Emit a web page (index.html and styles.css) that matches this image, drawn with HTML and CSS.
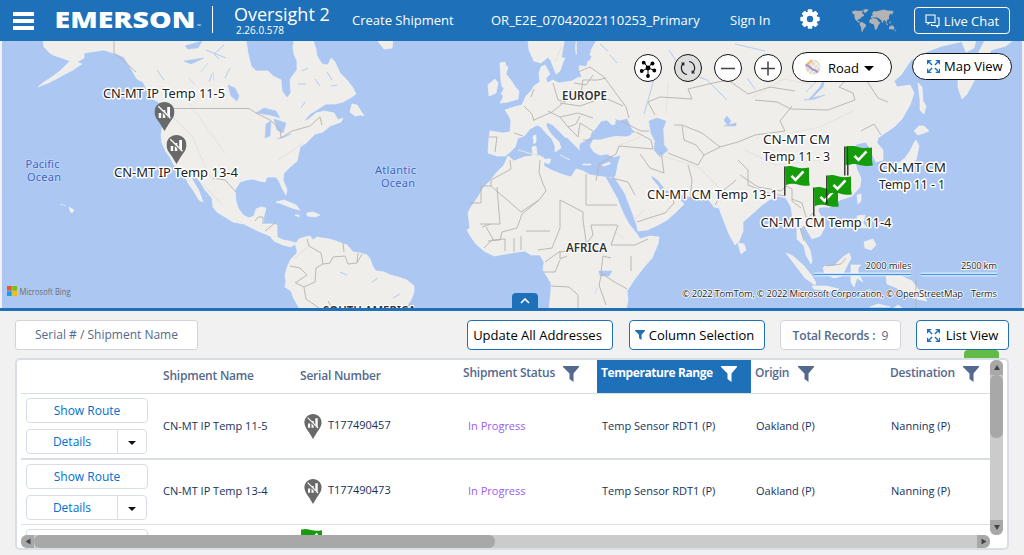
FILE: index.html
```
<!DOCTYPE html>
<html lang="en">
<head>
<meta charset="utf-8">
<title>Oversight 2</title>
<link rel="stylesheet" href="styles.css">
</head>
<body>
<svg class="defs" width="0" height="0">
  <defs>
    <symbol id="pin" viewBox="0 0 20 29"><path d="M10 0C4.400 0 0 4.300 0 10c0 4.500 3 8 5.500 11.500L10 29l4.500-7.500C17 18 20 14.500 20 10 20 4.300 15.600 0 10 0z" fill="#696969"/><path d="M4.200 11h2.500v5H4.200zM8.300 8h2.500v8H8.300zM12.700 5h2.800v11h-2.800z" fill="#fff"/><path d="M3.500 4.800l12 12" stroke="#696969" stroke-width="2.200"/><path d="M3.800 4.300l12.200 12" stroke="#fff" stroke-width="1.300"/></symbol>
    <symbol id="flag" viewBox="0 0 26 30"><path d="M.8.500v29" stroke="#222" stroke-width="1.300"/><path d="M1 .8c4-1.500 8-.5 12 .8 4 .9 8 .6 12-.2v12.500l.8 5.500c-4 .8-7 .3-11-.7-4-1.200-8-1.300-13.300.6z" fill="#159c0b"/><path d="M7.500 9.800l4 4 8-8.500" fill="none" stroke="#fff" stroke-width="2.600"/></symbol>
    <symbol id="funnel" viewBox="0 0 16 16"><path d="M0 0h16v1L10.500 7.500V16l-4-3V7.500L0 1z" fill="currentColor"/></symbol>
    <symbol id="expand" viewBox="0 0 12 12"><path d="M.5 4V.5H4M8 .5h3.500V4M11.500 8v3.500H8M4 11.500H.5V8M1 1l3.700 3.700M11 1L7.300 4.700M11 11L7.300 7.300M1 11l3.700-3.700" fill="none" stroke="#1e70b8" stroke-width="1.300"/></symbol>
  </defs>
</svg>

<header class="topbar">
  <div class="burger"><i></i><i></i><i></i></div>
  <svg class="brand" width="150" height="30" viewBox="0 -3 150 30"><text x="-.5" y="19.500" textLength="141" lengthAdjust="spacingAndGlyphs" class="brand-name">EMERSON</text><text x="142" y="19.500" class="brand-tm">™</text></svg>
  <div class="rule"></div>
  <div class="product"><span class="product-name">Oversight 2</span><span class="version">2.26.0.578</span></div>
  <nav class="nav">
    <a class="nav-create">Create Shipment</a>
    <a class="nav-org">OR_E2E_07042022110253_Primary</a>
    <a class="nav-sign">Sign In</a>
  </nav>
  <svg class="gear" width="20" height="20" viewBox="-10 -10 20 20"><g fill="#fff"><circle r="7.600"/><g id="t"><rect x="-2.300" y="-9.700" width="4.600" height="19.400" rx="1"/><rect x="-9.700" y="-2.300" width="19.400" height="4.600" rx="1"/></g><use href="#t" transform="rotate(45)"/></g><circle r="3.200" fill="#1e70b8"/></svg>
  <svg class="world" width="46" height="24" viewBox="0 0 46 24"><path fill="#b3b3b3" d="M1 2.500L4 1.500 8 2 11 1.500 12 3 10.500 4 12.500 5 13 7 10.500 8 9 10 7 10.500 6.500 12 8 12 9 13.500 7.500 13.500 4.500 11 3.500 8 3.500 5.500 1.500 4.500zM12 .8L16 0 17.500 1 15 3.500 13.500 4zM9 13.500L11 13 15 15.500 14.500 18 12.500 20 11.500 23 10.500 22.500 10 18 8.500 15.500zM21 4.500L23 2 25 2.500 29 1.500 33 .5 36 1.500 41 1.800 43 3 41.500 4 41 6 39.500 4.500 38 7 38 10 36 11 36 14 34.500 12 33 11 31.500 14 30 11 28 9.500 26 8.500 22.500 8.500 20 9 20 7 22 6.500zM19 10.500L22 9 26 10 28 13 29.500 13 27 17 26 20 24 21 23 15.500 20 14.500 18 13zM38 18L40 16.500 42 16.500 43.500 19 42.500 21 40 20 38 20.500zM34.500 13.500L37 15.500 37 16.500 35 15zM38.500 12.500h1v2h-1zM44.500 20.500L45.500 21 43.500 23z"/></svg>
  <button class="chat"><svg width="15" height="14" viewBox="0 0 15 14"><path d="M1 1h9v7.500H4.500L3 10V8.500H1zM12 4h2v7.500h-1.500V13L11 11.500H6.500V10" fill="none" stroke="#fff" stroke-width="1.100"/></svg>Live Chat</button>
</header>

<main>
<section class="map">
  <svg class="world-map" width="1020" height="267" viewBox="2 41 1020 267">
    <rect x="2" y="41" width="1020" height="267" fill="#acc7f2"/>
    <g class="land">
      <path d="M43 40L44 47 50 53 53 55 59 57 65 59 70 61 64 67 60 71 52 77 44 82 38 87 48 83 58 78 65 74 73 70 77 67 82 64 77 62 84 58 84 53 97 51 104 50 110 52 117 54 124 57 127 62 133 72 137 79 143 82 147 90 150 95 155 100 160 103 162 108 163 123 161 135 162 143 166 152 170 157 174 165 180 168 185 176 188 183 193 190 199 200 203 202 199 191 195 184 190 176 189 173 197 178 201 183 205 190 212 198 213 207 217 212 225 217 233 222 244 224 250 227 258 231 263 233 270 236 274 241 283 245 291 247 295 244 297 250 297 253 291 259 288 265 285 275 286 281 285 287 291 291 294 299 297 304 300 310 404 310 411 300 414 292 414 286 407 280 398 277 390 275 384 272 376 271 373 267 370 259 367 255 360 253 353 252 347 245 341 243 336 241 329 239 322 238 317 237 313 240 310 236 305 237 299 239 296 243 289 241 283 240 277 237 277 231 277 225 272 224 263 224 264 216 266 208 261 207 256 209 254 216 249 218 243 215 238 208 236 201 235 190 240 182 246 180 253 179 259 181 265 182 267 177 276 177 279 181 282 188 286 195 287 190 283 180 284 173 290 167 297 161 299 152 300 147 306 143 312 137 315 134 323 132 330 126 341 122 343 118 338 120 334 113 324 111 316 113 309 119 303 122 310 114 318 109 326 104 335 104 343 102 350 98 356 94 353 88 347 80 340 73 335 62 331 58 328 65 322 64 317 56 316 49 313 40H294L293 48 294 54 297 61 297 70 293 75 290 80 291 93 287 98 282 91 281 80 273 76 268 71 256 71 251 66 248 53 246 40z"/>
      <path d="M352 104l5 1 7 11-3-1-6 1-5-4zM377 40h16l-1 8-8 1zM276 202l8-2 12 5 4 5-8-2-10-4zM307 213l6-1 7 3-5 2-8-1zM295 215l4 0v2zM60 204l6 2M69 207l5 3-2 3-2-2z"/>
      <path d="M500 63l5-1 1 4 2 1-2 7 4 5 6 9 3 3-1 8-10 3-8 1 3-5 0-3-2-1 3-5-2-3-1-5zM488 85l7-6 3 4-2 10-7 3zM540 160l7-1 4 0-2 5zM532 147l4-1 1 8-4 2zM533 136l3-1 0 7-2 2zM583 164l8 0v1h-8zM602 165l8-3 0 2-6 2z"/>
      <path d="M528 40L529 50 534 61 541 63 548 57 551 61 556 74 560 71 563 62 566 56 565 40zM575 40L576 54 584 56 586 53 592 56 590 61 580 61 579 70 582 77 577 78 572 81 559 83 553 80 547 83 546 78 550 74 545 65 541 67 539 73 540 82 534 86 531 91 526 96 522 105 514 107 505 110 509 116 511 121 510 132 503 133 490 131 489 138 488 153 497 156 505 156 509 153 515 147 518 138 524 136 530 129 537 125 541 127 546 133 552 139 555 146 555 152 561 148 559 142 551 134 546 126 547 122 553 125 560 132 568 140 573 147 575 154 580 154 579 147 580 143 585 141 590 137 591 133 596 128 601 121 607 120 612 125 617 123 614 118 621 121 627 126 632 135 626 137 617 136 608 138 601 140 593 140 590 146 594 152 600 155 607 154 614 157 621 155 618 164 616 175 613 180 616 184 622 194 628 205 634 218 638 231 647 230 658 225 667 220 676 212 684 204 677 197 672 190 668 194 661 193 658 186 652 179 651 175 658 180 666 190 677 193 690 197 703 197 709 200 714 207 719 208 722 216 729 234 735 245 739 241 743 231 743 222 751 215 762 205 769 200 778 196 786 198 791 207 793 220 797 230 797 239 804 246 806 255 811 264 812 260 810 250 803 238 800 229 804 225 812 239 820 236 824 229 824 221 818 211 819 207 830 207 840 200 852 196 860 187 861 178 857 170 855 162 860 157 864 153 858 151 852 150 857 144 866 142 869 147 872 154 876 162 883 160 883 150 877 143 878 138 885 133 894 127 902 119 910 105 914 93 910 85 897 87 894 81 901 75 911 60 926 52 942 46 960 42 963 40z"/>
      <path d="M508 156L504 165 497 172 490 181 484 187 478 197 471 207 468 213 470 228 467 230 471 237 476 244 484 251 494 256 506 254 517 252 525 251 531 255 540 255 544 262 543 270 551 283 551 290 549 310H626L628 300 627 291 634 280 644 267 652 258 658 244 659 237 650 236 640 239 637 234 629 224 624 215 619 203 615 191 611 181 613 178 604 177 590 175 583 171 576 169 571 177 561 174 551 170 544 166 544 158 538 155 524 157 514 161z"/>
      <path d="M918 83l4 4 1 14 3 5-2 8-4-4 0-10zM919 126l5 0 5 5-5 2-6 2-4-4zM916 140l3 6-3 14-9 5-8 3-3-3 9-7 5-7 4-8zM896 166l4-1-1 4-3 1zM857 195l4-1 0 7-3 3zM738 243l6 1 2 6-5 4zM819 205l4-1v3h-4zM857 216l8-1-2 8 4 5-5 0-4-6zM864 242l9-3 3 6-5 5-6-2zM786 253l7 3 11 10 8 10 4 7-1 2-10-7-9-12zM812 286l14 0 13 3-7 2-18-2zM825 266l9 0 9-9 6-4 2 5-4 8-5 10-8 2-9-4-2-6zM851 265l10 0-3 3 0 5 5 9-6-4-3 9-3-5zM886 275l15 1 11 5 6 8 9 12-10-2-12-3-8-8-10-4z"/>
      <path d="M958 74l18 0-1 5-8 15-5 5-4-12zM961 40l15 0-2 8-8 4zM985 40h28l-7 6-15 4-7 18-6 2-4-8zM925 40l13 0-6 3z"/>
      <path d="M870 307l20 0-12-3zM894 308l8 0-4-3z"/>
    </g>
    <g class="water">
      <path d="M592 138L598 131 607 133 613 136 620 129 615 122 627 119 632 130 635 132 621 136 615 135 604 136zM649 121l8-3 9 3-3 8 1 16 4 5-8 7-6-7 1-9-4-8zM562 139l5-1 13 13 2 7-6 0-4-9-8-6zM606 177l9 2 9 14 6 15 7 20-4-4-9-15-8-14z"/>
      <path d="M577 40h19l-5 9-5 17-7-1-2-8zM562 57l3-17h11l-3 14-8 4zM256 113l8-5 12 3 4 7-10-3zM266 124l5-3-1 15-5 2zM274 119l12 4-3 10-6-3zM277 139l14-5-9 4zM228 85l7 3 4 8-2 5-6-5zM185 46l17-5-4 7-10 1zM184 61l20-3-13 6zM189 78l6 7M201 72l7-9M213 72l1 9M724 120l3-4 4 5-3 5zM804 100l21-5-10 4zM736 123l-12 3 12 0zM599 271l13 0-3 5-9 0zM597 288l-2 6M810 98l10-11 6-13-3 13-13 13z"/>
    </g>
    <g class="lake-lines"><path d="M157 70l7 10M224 45l-10 9 5 5M230 68l-5 10M206 50l20 8M212 74l-3 8M298 84l8 0M315 79l5 7M305 102l-4 6M337 85l-6 1M308 68l-6 3M327 72l5 8M347 275l-7-3M372 282l6-4M393 298l7-4M655 75l-4 15-7 24M669 50l13 20 25 10 20 20M735 44l30 7M806 92l20-20M610 55l7 8M600 44l8 7M747 78l8 11M735 64l8 6"/></g>
    <g class="relief"><path d="M168 112l25 25 12 30 10 16M185 98l22 30 18 25M203 185l20 20M560 155l10 5M518 150l25 7M278 160l25-17M295 258l15-13M660 155l40 13 19 20M770 137l50-10 35-17M745 150l30 15 45-5M752 98l32-19 30 6M800 75l40-20M620 145l20-8M668 84l-2 30M555 62l7-17M634 220l10-10M614 232l10 6"/></g>
    <g class="borders">
      <path d="M114 40v13l12 10 10 9M172 108.500H249L256 113 270 120 280 129 281 138 292 131 310 126 320 117 322 125M213 178l12 2 11 12"/>
      <path d="M255 221l3-4 5 0 0 7M265 231l10-8M307 239l2 7 12 7 2 11 7-1 3-6 12-1 3 8 9-1 5-9M343 243l1 9M358 253l-1 9M323 264l-7 4-1 14-11 5 2 12 13 9M290 266l10 2 7 7-12 8M304 287l-8-4M328 301l4 7"/>
      <path d="M489 137h8l-2 15M514 133l9 3M524 106l8 8 2 7M531 97l3-8M553 83l5 17 8 2M583 80l-3 20M578 72l12-5M590 67l14 10 22 30 3 11M574 83l12 2 7-10M534 120l18-8 10-8M560 103l20 3 14-5M548 111l12 6 18-4 15 5M560 117l8 10 8-3 4-8M568 127l10 10 2-14 13 8M583 80l15 0 8-2M605 98l18 8M583 140l9 0M621 121l20 10 8 0M636 132l15 8 2 9-34-3M619 146l-3 8-17 10-3 17M640 154l10 14 14 5-3-22M612 178l16 4 7 13M637 222l15-5 13-4 9-10-1-5"/>
      <path d="M655 115l-7-13 12-5 32 2-4-10 25-6 15-3 20 14 22-7 25 4M674 125l8 0 2 15 12 5 8 10-6 10-30-12M682 125l20 8 18 14-16 8M720 147l18-5 17-7 30-4-5-10 12-15M688 165l4 15-2 20M715 205l9-15 12-10M738 160l10 10 0 15 20 8 17 3M740 175l18 12 23 4 5-5 6 3 0 12 9 7M755 100l22 2 14 7 37 1 27-10-2-7-14-6 13-12 11 0 15 23 10 4M792 199l10 4 4 14 10 6M804 222l9-9 11 14M800 228l4 13M881 135l-7-11-13 7M826 266l15-2 5-6"/>
      <path d="M510 160l1 9-20 11v6h-10v17h-12M491 186l30 26 18-12 7-9-4-10-3-9 1-12M586 174v31h31M560 200l23 12 0 8 4 28M497 187l3 37-20 0M539 200l-17 14-5 14-15 4-2 8-12 1M560 200l0 28-8 20-14 2M526 231l24 0M491 224l-9 3M486 227l7 12-9 9M493 240l12-1v12M514 238v14M521 236v14M587 248l-28 4-14 10M560 251l0 8 7-3M543 272l12 0 5-12M583 248l10-13-2-10 26 0M611 258l-8-2-2 17 12 8 14 8M551 286l18 1 9 8 0 15M602 272l-3 13 7 20M618 225l-7 20 24 0 13-6M631 271l0-15"/>
      <path d="M916 279v29"/>
    </g>
    <g class="sea-label"><text x="25.500" y="168" textLength="34">Pacific</text><text x="27" y="181" textLength="34">Ocean</text><text x="375" y="174" textLength="41">Atlantic</text><text x="381" y="187" textLength="34">Ocean</text></g>
    <g class="continent"><text x="562" y="100" textLength="45" lengthAdjust="spacingAndGlyphs">EUROPE</text><text x="566" y="252" textLength="41" lengthAdjust="spacingAndGlyphs">AFRICA</text><text x="323" y="315" textLength="93" lengthAdjust="spacingAndGlyphs">SOUTH AMERICA</text></g>
    <use href="#pin" x="154.500" y="102" width="20" height="29"/>
    <use href="#pin" x="166.500" y="135" width="20" height="29"/>
    <use href="#flag" x="784" y="166" width="26" height="30"/>
    <use href="#flag" x="844" y="146" width="26" height="30"/>
    <use href="#flag" x="847" y="146" width="26" height="30"/>
    <use href="#flag" x="813" y="187" width="26" height="30"/>
    <use href="#flag" x="826" y="175" width="26" height="30"/>
    <g class="ship-label">
      <text x="103" y="98" textLength="122" lengthAdjust="spacingAndGlyphs">CN-MT IP Temp 11-5</text>
      <text x="114" y="177" textLength="124" lengthAdjust="spacingAndGlyphs">CN-MT IP Temp 13-4</text>
      <text x="763" y="144" textLength="67" lengthAdjust="spacingAndGlyphs">CN-MT CM</text><text x="763" y="161" textLength="67" lengthAdjust="spacingAndGlyphs">Temp 11 - 3</text>
      <text x="879" y="172" textLength="67" lengthAdjust="spacingAndGlyphs">CN-MT CM</text><text x="879" y="189" textLength="66" lengthAdjust="spacingAndGlyphs">Temp 11 - 1</text>
      <text x="647" y="199" textLength="131" lengthAdjust="spacingAndGlyphs">CN-MT CM Temp 13-1</text>
      <text x="760.500" y="227" textLength="131" lengthAdjust="spacingAndGlyphs">CN-MT CM Temp 11-4</text>
    </g>
    <path d="M814 274.500h97M921 274.500h76" stroke="#fff" stroke-width="3.500"/><path d="M814 274.500h97M921 274.500h76" stroke="#3f93ee" stroke-width="1.300"/>
    <g class="credit"><text x="865.500" y="269" textLength="46">2000 miles</text><text x="961" y="269" textLength="36">2500 km</text>
      <text x="682" y="297" textLength="281">© 2022 TomTom, © 2022 Microsoft Corporation, © OpenStreetMap</text><text x="971" y="297" textLength="26">Terms</text></g>
    <path fill="#f35325" d="M7 286h4.700v4.700H7z"/><path fill="#81bc06" d="M12.300 286H17v4.700h-4.700z"/><path fill="#05a6f0" d="M7 291.300h4.700v4.700H7z"/><path fill="#ffba08" d="M12.300 291.300H17v4.700h-4.700z"/>
    <text class="bing" x="19.500" y="295" textLength="51" lengthAdjust="spacingAndGlyphs">Microsoft Bing</text>
  </svg>

  <div class="map-tools">
    <button class="round"><svg width="26" height="26" viewBox="-13 -13 26 26"><path d="M0 0L-4-6M0 0L4-5M0 0L-6 3M0 0L6 2M0 0V8" stroke="#000" stroke-width="1"/><circle r="2.400"/><circle cx="-4.300" cy="-5.300" r="1.900"/><circle cx="4.500" cy="-4.500" r="1.900"/><circle cx="-6.300" cy="3" r="1.900"/><circle cx="6.300" cy="2.500" r="1.900"/><circle cy="8" r="1.900"/></svg></button>
    <button class="round dim"><svg width="26" height="26" viewBox="-13 -13 26 26"><path d="M-1 6.500A6.500 6.500 0 0 1-4.500-4.700M1-6.500A6.500 6.500 0 0 1 4.500 4.700M-6.600-5h2.400v2.600M6.600 5H4.200V2.400" fill="none" stroke="#222" stroke-width="1.200"/></svg></button>
    <button class="round"><svg width="26" height="26" viewBox="-13 -13 26 26"><path d="M-7 .5H7" stroke="#444" stroke-width="1.500"/></svg></button>
    <button class="round"><svg width="26" height="26" viewBox="-13 -13 26 26"><path d="M-7 .5H7M0-6.500v14" stroke="#444" stroke-width="1.500"/></svg></button>
    <button class="pill road"><svg width="16" height="16" viewBox="0 0 16 16"><circle cx="8" cy="8" r="7.600" fill="#e2dccf"/><path d="M3 14L13 3M8 1l7 8M6 15l9-9M5 4l8 9" stroke="#fff" stroke-width=".9"/><path d="M1 5.500C3 5 6 4 6.500.8" stroke="#f3b65a" stroke-width="1.600" fill="none"/><path d="M.5 6c4 0 5 4 7.500 4.500 3 .5 4 2 5 3" stroke="#a88ad2" stroke-width="1.800" fill="none"/></svg><span>Road</span><i class="caret"></i></button>
    <button class="pill view"><svg width="13" height="13"><use href="#expand"/></svg><span>Map View</span></button>
  </div>
  <button class="collapse"><svg width="10" height="6" viewBox="0 0 10 6"><path d="M1 5l4-4 4 4" fill="none" stroke="#fff" stroke-width="1.600"/></svg></button>
</section>

<section class="toolbar">
  <div class="search">Serial # / Shipment Name</div>
  <button class="btn update">Update All Addresses</button>
  <button class="btn columns"><svg width="10" height="10"><use href="#funnel"/></svg>Column Selection</button>
  <div class="total"><b>Total Records :</b> 9</div>
  <button class="btn list"><svg width="13" height="13"><use href="#expand"/></svg>List View</button>
</section>
<div class="tab-line"><i class="green-tab"></i></div>

<section class="panel">
  <div class="grid-area">
    <div class="row head">
      <div></div><div class="plain">Shipment Name</div><div class="plain">Serial Number</div>
      <div><span class="h-status">Shipment Status</span><svg width="16" height="16"><use href="#funnel"/></svg></div>
      <div class="active"><span class="h-temp">Temperature Range</span><svg width="16" height="16"><use href="#funnel"/></svg></div>
      <div><span class="h-origin">Origin</span><svg width="16" height="16"><use href="#funnel"/></svg></div>
      <div><span class="h-dest">Destination</span><svg width="16" height="16"><use href="#funnel"/></svg></div>
    </div>
    <div class="row body-row">
      <div class="actions"><button class="route">Show Route</button><div class="split"><button>Details</button><button class="more"><i class="caret"></i></button></div></div>
      <div class="cell name">CN-MT IP Temp 11-5</div>
      <div class="cell serial"><svg width="18" height="25"><use href="#pin"/></svg><span>T177490457</span></div>
      <div class="cell progress">In Progress</div><div class="cell">Temp Sensor RDT1 (P)</div><div class="cell">Oakland (P)</div><div class="cell">Nanning (P)</div>
    </div>
    <div class="row body-row second">
      <div class="actions"><button class="route">Show Route</button><div class="split"><button>Details</button><button class="more"><i class="caret"></i></button></div></div>
      <div class="cell name">CN-MT IP Temp 13-4</div>
      <div class="cell serial"><svg width="18" height="25"><use href="#pin"/></svg><span>T177490473</span></div>
      <div class="cell progress">In Progress</div><div class="cell">Temp Sensor RDT1 (P)</div><div class="cell">Oakland (P)</div><div class="cell">Nanning (P)</div>
    </div>
    <div class="row peek">
      <div class="actions"><button class="route"></button></div><div></div>
      <div class="peek-flag"><svg width="22" height="25"><use href="#flag"/></svg></div>
    </div>
  </div>
  <div class="vbar"><i class="arrow up"></i><i class="vthumb"></i><i class="arrow down"></i></div>
  <div class="hbar"><i class="arrow left"></i><i class="hthumb"></i><i class="arrow right"></i></div>
</section>
</main>
</body>
</html>
```
FILE: styles.css
```
* { box-sizing: border-box; }
body { margin: 0; width: 1024px; height: 555px; overflow: hidden; background: #f1f1f1; font-family: "Open Sans", "Noto Sans", sans-serif; color: #16325c; }
button { font: inherit; margin: 0; padding: 0; }
svg { flex: none; display: block; }
i { display: block; }
.defs { position: absolute; }

.topbar { height: 41px; background: #1e70b8; color: #fff; display: flex; align-items: flex-start; }
.burger { width: 21px; margin: 12px 0 0 13px; display: grid; gap: 3px; }
.burger i { height: 4px; background: #fff; }
.brand { margin: 5px 0 0 21px; overflow: visible; }
.brand-name { font-size: 23px; font-weight: 800; fill: #fff; }
.brand-tm { font-size: 5px; fill: #fff; }
.rule { width: 1px; height: 27px; background: #fff; margin: 6px 0 0 7px; }
.product { width: 118px; margin: 3px 0 0 21px; display: flex; flex-direction: column; }
.product-name { font-size: 18px; line-height: 22px; }
.version { font-size: 10px; line-height: 10px; font-weight: 500; margin: 0 0 0 2px; }
.nav { width: 448px; display: flex; font-size: 13px; line-height: 20px; margin-top: 10px; white-space: nowrap; }
.nav-create { width: 139px; }
.nav-org { width: 239px; }
.gear { margin: 9px 0 0 0; }
.world { margin: 9px 0 0 31px; }
.chat { width: 96px; height: 27px; margin: 7px 0 0 17px; border: 1px solid #fff; border-radius: 4px; background: transparent; color: #fff; font-size: 13px; display: flex; align-items: center; justify-content: center; gap: 4px; }

.map { height: 270px; padding: 0 2px; border-bottom: 3px solid #1e70b8; position: relative; }
.land { fill: #efeeeb; stroke: #f7f7f6; stroke-width: .6; stroke-linejoin: round; }
.water { fill: #acc7f2; stroke: #acc7f2; stroke-width: .5; }
.lake-lines { fill: none; stroke: #b4cbf0; stroke-width: 1; }
.relief { fill: none; stroke: #e6e4e0; stroke-width: 1.200; }
.borders { fill: none; stroke: #b7b2ac; stroke-width: .9; stroke-linejoin: round; }
.sea-label { font-family: "Noto Sans", sans-serif; font-size: 11px; fill: #3c62c7; paint-order: stroke; stroke: #c4d7f6; stroke-width: 1.500; }
.continent { font-family: "Noto Sans", sans-serif; font-size: 12px; font-weight: 600; fill: #333; paint-order: stroke; stroke: #fff; stroke-width: 2; }
.ship-label { font-family: "Noto Sans", sans-serif; font-size: 12.500px; fill: #222; paint-order: stroke; stroke: #fff; stroke-width: 3; stroke-linejoin: round; }
.credit { font-size: 9.500px; fill: #222; paint-order: stroke; stroke: #fff; stroke-width: 1.500; }
.bing { font-size: 9px; fill: #6b6f75; }

.map-tools { position: absolute; left: 634px; top: 11px; width: 378px; display: flex; align-items: flex-start; }
.round { width: 28px; height: 28px; margin: 2px 12px 0 0; border: 1px solid #111; border-radius: 50%; background: #fff; }
.dim { background: #dedede; }
.pill { border: 1px solid #111; border-radius: 16px; background: #fff; color: #000; display: flex; align-items: center; font-size: 13px; }
.road { width: 100px; height: 30px; margin-left: -2px; padding-left: 12px; }
.road span { margin: 1px 5px 0 7px; }
.caret { border: 5px solid transparent; border-top: 5px solid #000; border-bottom: 0; }
.road .caret { margin-top: 2px; }
.view { width: 100px; height: 27px; margin: 1px 0 0 20px; padding-left: 14px; gap: 4px; }
.view span { margin-top: -1px; }
.collapse { position: absolute; left: 512px; top: 252px; width: 26px; height: 16px; border: 0; border-radius: 4px 4px 0 0; background: #1e70b8; display: flex; align-items: center; justify-content: center; }

.toolbar { height: 39px; padding: 9px 15px 0; display: flex; white-space: nowrap; }
.search { width: 183px; height: 30px; border: 1px solid #d0d5dd; border-radius: 3px; background: #fff; color: #54698d; font-size: 12px; line-height: 28px; text-align: center; }
.btn { height: 30px; border: 1px solid #1e70b8; border-radius: 4px; background: #fff; color: #000; font-size: 13px; display: flex; align-items: center; justify-content: center; gap: 4px; }
.update { width: 146px; margin-left: 269px; padding-right: 5px; }
.columns { width: 136px; margin-left: 16px; padding-right: 5px; }
.columns svg { color: #1e70b8; }
.total { width: 121px; height: 30px; margin-left: 15px; border: 1px solid #d0d5dd; border-radius: 4px; background: #fff; color: #54698d; font-size: 12px; line-height: 29px; text-align: center; }
.total b { font-weight: 600; letter-spacing: -.15px; margin-right: 3px; }
.list { width: 93px; margin-left: 15px; gap: 6px; }
.tab-line { height: 8px; padding: 0 25px; display: flex; justify-content: flex-end; }
.green-tab { width: 35px; height: 8px; border-radius: 4px 4px 0 0; background: #62bb46; }

.panel { width: 994px; height: 192px; margin-left: 15px; border: 2px solid #d8dde6; border-radius: 5px; background: #fff; padding-left: 4px; display: grid; grid-template: 175px 13px / 969px 13px; }
.grid-area { overflow: hidden; }
.row { display: grid; grid-template-columns: 137px 137px 164px 138px 154px 135px 104px; }
.head { height: 34px; border-bottom: 1px solid #d8dde6; color: #54698d; font-size: 12px; font-weight: 600; line-height: 26px; letter-spacing: -.22px; white-space: nowrap; }
.head > div { padding-left: 4px; display: flex; }
.head svg { margin-top: 6px; }
.head .plain { line-height: 32px; padding-left: 5px; }
.head .active { background: #1e70b8; color: #fff; font-weight: 700; letter-spacing: -.42px; }
.h-status { width: 100px; }
.h-temp { width: 120px; }
.h-origin { width: 43px; }
.h-dest { width: 73px; }
.body-row { height: 66px; border-bottom: 2px solid #d8dde6; }
.second { height: 65px; border-bottom-width: 1px; }
.actions { padding: 4px 0 0 5px; display: flex; flex-direction: column; gap: 6px; font-size: 12px; }
.actions button { height: 25px; border: 1px solid #d8dde6; border-radius: 4px; background: #fff; color: #0070d2; }
.route { width: 122px; }
.split { display: flex; width: 121px; }
.split button { width: 92px; border-radius: 4px 0 0 4px; }
.split .more { width: 30px; margin-left: -1px; border-radius: 0 4px 4px 0; display: flex; align-items: center; justify-content: center; }
.more .caret { border-width: 4px; border-bottom-width: 0; border-top-color: #111; margin-top: 2px; }
.cell { padding: 0 0 0 5px; font-size: 11px; line-height: 64px; white-space: nowrap; }
.second .cell { line-height: 62px; }
.serial { display: flex; padding-left: 9px; line-height: 62px; }
.second .serial { line-height: 60px; }
.serial svg { margin-top: 20px; }
.second .serial svg { margin-top: 19px; }
.serial span { margin-left: 6px; }
.progress { color: #9b5cf0; padding-left: 9px; }
.peek { height: 12px; }
.peek-flag { padding: 4px 0 0 6px; }

.vbar { width: 13px; height: 175px; background: #cbcbcb; border-radius: 6px; overflow: hidden; display: flex; flex-direction: column; justify-content: space-between; }
.vthumb { height: 63px; margin-bottom: 82px; border-radius: 6px; background: #a8a8a8; }
.hbar { width: 969px; height: 13px; background: #cbcbcb; border-radius: 6px; overflow: hidden; display: flex; justify-content: space-between; }
.hthumb { width: 461px; margin-right: 482px; border-radius: 6px; background: #a8a8a8; }
.arrow { width: 13px; height: 15px; flex: none; background: #a8a8a8; display: grid; place-items: center; }
.arrow::before { content: ""; border: 3px solid transparent; border-bottom: 5px solid #444; border-top: 0; }
.down::before { transform: rotate(180deg); }
.left, .right { height: 13px; }
.left::before { transform: rotate(-90deg); }
.right::before { transform: rotate(90deg); }
```
